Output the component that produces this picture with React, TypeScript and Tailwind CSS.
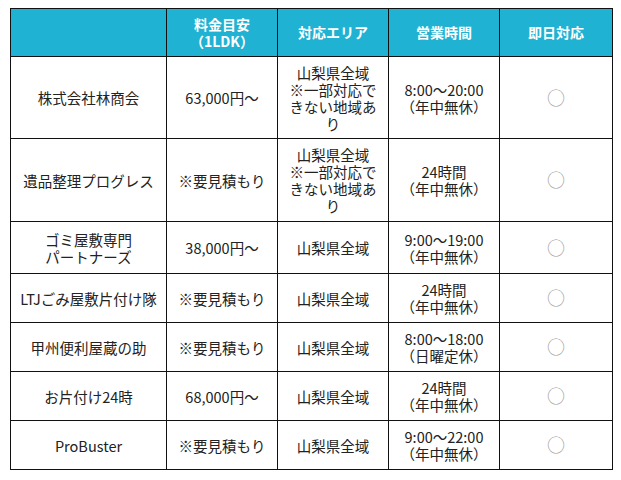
const headers = [['料金目安', '（1LDK）'], ['対応エリア'], ['営業時間'], ['即日対応']];

type Row = { name: string[]; price: string; area: string[]; hours: string[]; h: string };

const rows: Row[] = [
  { name: ['株式会社林商会'], price: '63,000円〜', area: ['山梨県全域', '※一部対応できない地域あり'], hours: ['8:00〜20:00', '（年中無休）'], h: 'h-[82px]' },
  { name: ['遺品整理プログレス'], price: '※要見積もり', area: ['山梨県全域', '※一部対応できない地域あり'], hours: ['24時間', '（年中無休）'], h: 'h-[83px]' },
  { name: ['ゴミ屋敷専門', 'パートナーズ'], price: '38,000円〜', area: ['山梨県全域'], hours: ['9:00〜19:00', '（年中無休）'], h: 'h-[52px]' },
  { name: ['LTJごみ屋敷片付け隊'], price: '※要見積もり', area: ['山梨県全域'], hours: ['24時間', '（年中無休）'], h: 'h-[49px]' },
  { name: ['甲州便利屋蔵の助'], price: '※要見積もり', area: ['山梨県全域'], hours: ['8:00〜18:00', '（日曜定休）'], h: 'h-[49px]' },
  { name: ['お片付け24時'], price: '68,000円〜', area: ['山梨県全域'], hours: ['24時間', '（年中無休）'], h: 'h-[49px]' },
  { name: ['ProBuster'], price: '※要見積もり', area: ['山梨県全域'], hours: ['9:00〜22:00', '（年中無休）'], h: 'h-[49px]' },
];

const cell = 'border border-[#111] px-2 py-[6px] text-center align-middle';

function Lines({ lines }: { lines: string[] }) {
  return (
    <>
      {lines.map((l) => (
        <div key={l}>{l}</div>
      ))}
    </>
  );
}

export default function App() {
  return (
    <div className="min-h-[480px] bg-white pl-[10px] pt-[8px] font-['Noto_Sans_CJK_JP',sans-serif] text-[14.5px] leading-[17px] text-[#222]">
      <table className="w-[602px] table-fixed border-collapse">
        <colgroup>
          <col className="w-[156px]" />
          <col className="w-[111px]" />
          <col className="w-[111px]" />
          <col className="w-[111px]" />
          <col className="w-[113px]" />
        </colgroup>
        <thead>
          <tr className="h-[48px] bg-[#20b2d2] text-[14px] font-bold text-white">
            <th className={cell}></th>
            {headers.map((lines, i) => (
              <th key={i} className={cell}>
                <Lines lines={lines} />
              </th>
            ))}
          </tr>
        </thead>
        <tbody>
          {rows.map((r) => (
            <tr key={r.name.join('')} className={r.h}>
              <td className="border border-[#111] px-[2px] py-[6px] text-center align-middle">
                <Lines lines={r.name} />
              </td>
              <td className={cell}>{r.price}</td>
              <td className={cell}>
                <Lines lines={r.area} />
              </td>
              <td className={cell}>
                <Lines lines={r.hours} />
              </td>
              <td className={cell}>
                <span className="text-[18px] font-light text-[#999]">○</span>
              </td>
            </tr>
          ))}
        </tbody>
      </table>
    </div>
  );
}
